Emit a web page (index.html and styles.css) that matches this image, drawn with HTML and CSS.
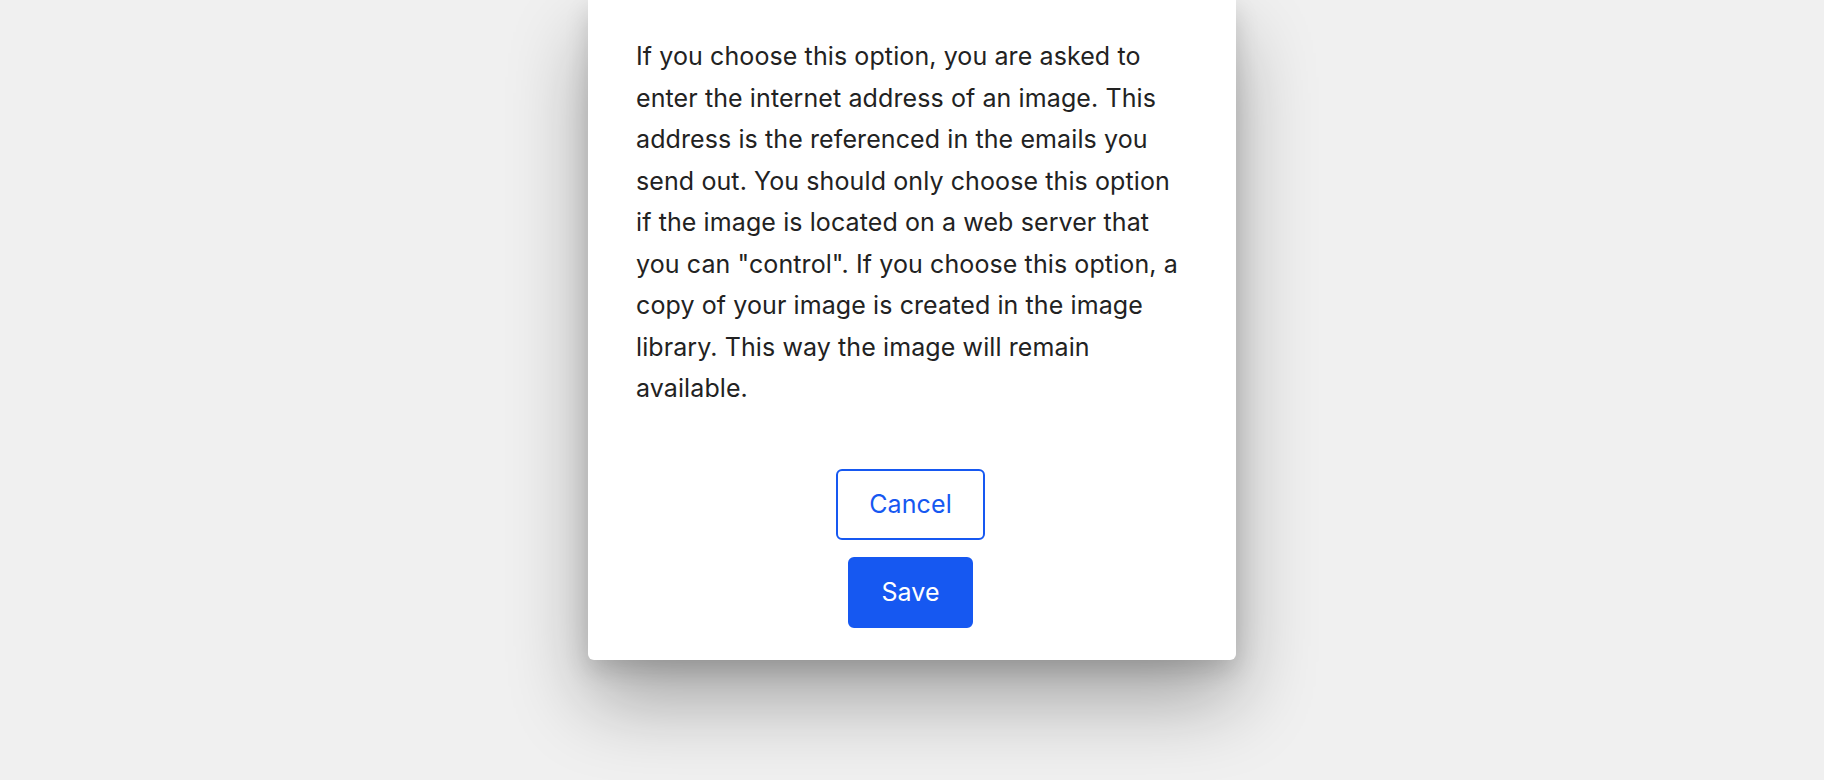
FILE: index.html
```html
<!DOCTYPE html>
<html lang="en">
<head>
    <meta charset="UTF-8">
    <meta name="viewport" content="width=device-width, initial-scale=1.0">
    <title>Image option</title>
    <link rel="stylesheet" href="styles.css">
</head>
<body>
    <div class="backdrop">
        <div class="dialog">
            <p class="dialog-text">If you choose this option, you are asked to enter the internet address of an image. This address is the referenced in the emails you send out. You should only choose this option if the image is located on a web server that you can "control". If you choose this option, a copy of your image is created in the image library. This way the image will remain available.</p>
            <div class="dialog-actions">
                <button type="button" class="btn btn-outline">Cancel</button>
                <button type="button" class="btn btn-primary">Save</button>
            </div>
        </div>
    </div>
</body>
</html>
```

FILE: styles.css
```css
html, body { height: 100%; }
body { margin: 0; background: #f0f0f0; font-family: Inter, Roboto, "Liberation Sans", sans-serif; overflow: hidden; }

.backdrop { display: flex; justify-content: center; }

.dialog {
    width: 648px;
    box-sizing: border-box;
    background: #fff;
    border-radius: 0 0 6px 6px;
    padding: 36px 48px 32px;
    box-shadow: 0 40px 80px rgba(0, 0, 0, 0.32), 0 10px 24px rgba(0, 0, 0, 0.14);
}

.dialog-text { margin: 0; font-size: 25px; line-height: 41.5px; letter-spacing: 0.1px; color: #222; }

.dialog-actions { display: flex; flex-direction: column; align-items: center; gap: 17px; margin-top: 59px; padding-right: 3px; }

.btn {
    font-family: inherit;
    font-size: 25px;
    line-height: 41px;
    letter-spacing: 0.1px;
    padding: 13px 31px;
    border: 2px solid #1658f1;
    border-radius: 6px;
    cursor: pointer;
}
.btn-outline { background: #fff; color: #1658f1; }
.btn-primary { background: #1658f1; color: #fff; }
```
